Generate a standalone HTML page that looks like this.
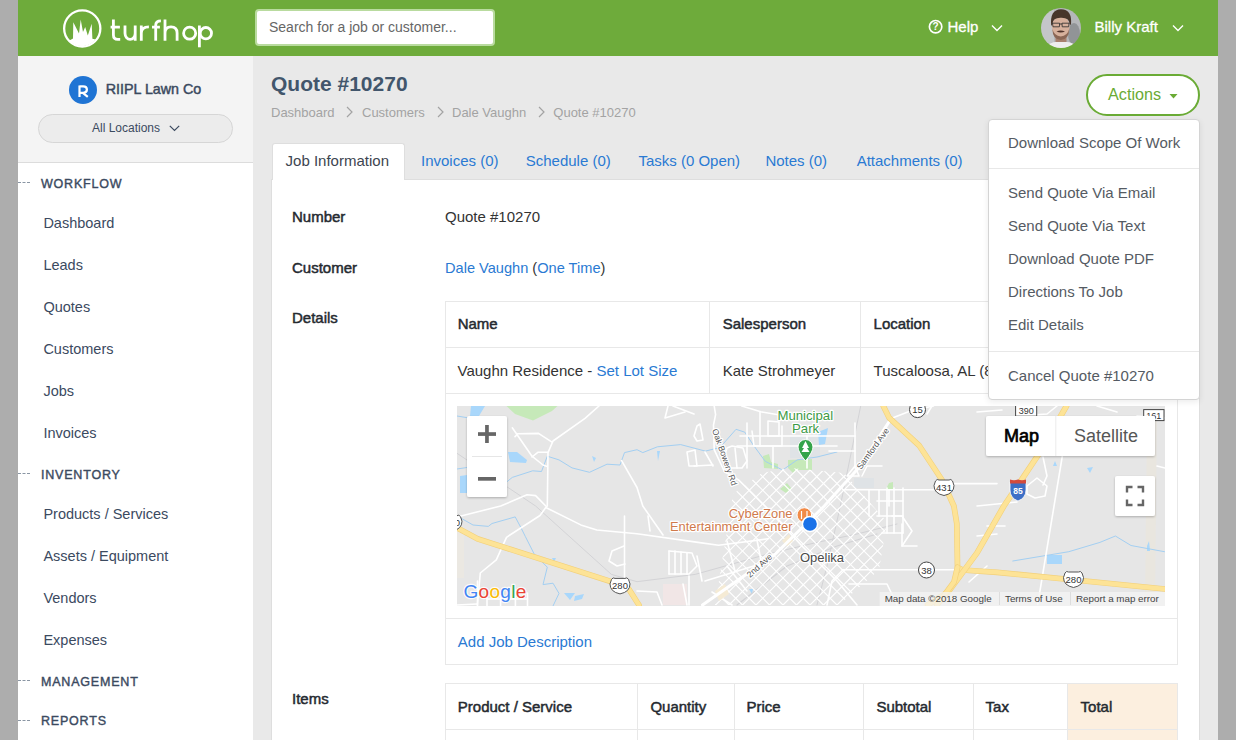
<!DOCTYPE html>
<html><head><meta charset="utf-8">
<style>
*{box-sizing:border-box;margin:0;padding:0}
html,body{width:1236px;height:740px;overflow:hidden;background:#adadad;font-family:"Liberation Sans",sans-serif;position:relative}
.t{position:absolute;white-space:nowrap;line-height:1}
.r{position:absolute}
svg{position:absolute;overflow:visible}
</style></head><body>
<div class="r" style="left:18px;top:0px;width:1200px;height:740px;background:#e9e9e9"></div>
<div class="r" style="left:18px;top:0px;width:1200px;height:56px;background:#6eab3b"></div>
<svg style="left:62px;top:8px" width="41" height="41" viewBox="0 0 41 41"><circle cx="20.25" cy="20.5" r="18.1" fill="none" stroke="#fff" stroke-width="2.3"/><path d="M7.4,32.6 L11,30.5 L11.3,14.2 L17,25.5 L18.7,11.6 L21,24 L23.2,19 L25.8,27.4 L29.7,15.8 L30.4,30.7 L33.6,31.6 A17.2,17.2 0 0 1 7.4,32.6 Z" fill="#fff"/></svg>
<svg style="left:0px;top:0px" width="240" height="56" viewBox="0 0 240 56"><path fill="none" stroke="#fff" stroke-width="2.8" d="M113.4,19.4 V35 Q113.4,39.4 117.8,39.4 H120.2 M110.6,27.1 H119.9"/><path fill="none" stroke="#fff" stroke-width="2.8" d="M125,25.5 V33.2 A5.1,6.2 0 0 0 135.2,33.2 M135.2,25.5 V40.8"/><path fill="none" stroke="#fff" stroke-width="2.8" d="M141.3,25.5 V40.8 M141.3,33 Q141.3,26.9 148.9,26.9"/><path fill="none" stroke="#fff" stroke-width="2.8" d="M155.7,40.8 V25.2 Q155.7,20.8 160.9,20.8 M152,27.1 H159.9"/><path fill="none" stroke="#fff" stroke-width="2.8" d="M165,19.4 V40.8 M165,33 Q165,26.9 171,26.9 Q177.1,26.9 177.1,33 V40.8"/><circle fill="none" stroke="#fff" stroke-width="2.8" cx="189.65" cy="33.15" r="6.05"/><path fill="none" stroke="#fff" stroke-width="2.8" d="M199.4,25.5 V47.3"/><circle fill="none" stroke="#fff" stroke-width="2.8" cx="205.85" cy="33.15" r="5.65"/></svg>
<div class="r" style="left:255px;top:9px;width:240px;height:37px;background:#fff;border:2px solid #b9db9f;border-radius:4px"></div>
<div class="t" style="left:269.0px;top:20.1px;font-size:14px;color:#666;">Search for a job or customer...</div>
<svg style="left:928px;top:19px" width="16" height="16" viewBox="0 0 16 16"><circle cx="7.6" cy="7.7" r="6.2" fill="none" stroke="#fff" stroke-width="1.7"/><text x="7.6" y="11.2" font-size="10" font-weight="bold" text-anchor="middle" fill="#fff" font-family="Liberation Sans">?</text></svg>
<div class="t" style="left:947.5px;top:18.8px;font-size:15px;color:#fff;-webkit-text-stroke:0.3px #fff;">Help</div>
<svg style="left:991px;top:24px" width="12" height="8" viewBox="0 0 12 8"><path d="M1 1.5 L6 6.5 L11 1.5" fill="none" stroke="#fff" stroke-width="1.4"/></svg>
<svg style="left:1041px;top:8px" width="40" height="40" viewBox="0 0 40 40"><defs><clipPath id="av"><circle cx="20" cy="20" r="20"/></clipPath><filter id="avb"><feGaussianBlur stdDeviation="0.7"/></filter></defs><g clip-path="url(#av)"><g filter="url(#avb)"><rect x="-2" y="-2" width="44" height="44" fill="#b5b7ba"/><rect x="-2" y="-2" width="15" height="44" fill="#c4c6c9"/><ellipse cx="33" cy="26" rx="6" ry="11" fill="#86888b" opacity="0.75"/><path d="M4,42 L8,36 Q14,33 20,34 Q27,33 33,36 L37,42Z" fill="#eeeeee"/><rect x="14.5" y="26" width="11" height="8" fill="#a8806e"/><ellipse cx="19.8" cy="19" rx="8.8" ry="11.4" fill="#d6b09c"/><path d="M11.4,21 Q11.6,31.5 19.8,32 Q28,31.5 28.2,21 Q26.5,28 19.8,28.5 Q13.1,28 11.4,21Z" fill="#8a6654"/><path d="M10.2,18 Q8.5,1.5 20,1.2 Q31.5,1.5 30,17 L28.6,16 Q28.3,9.5 20,9.8 Q11.8,9.5 11.5,16Z" fill="#46352b"/><path d="M11.5,15.2 L18.6,15.2 L18.4,18.8 L12,18.8Z M21,15.2 L28.1,15.2 L27.6,18.8 L21.2,18.8Z M18.6,16 L21,16" fill="none" stroke="#2a2a2a" stroke-width="0.8"/><path d="M15.5,23.5 Q19.8,21.5 24,23.5 Q19.8,25.5 15.5,23.5Z" fill="#4f3229"/></g></g></svg>
<div class="t" style="left:1094.5px;top:18.8px;font-size:15px;color:#fff;-webkit-text-stroke:0.3px #fff;">Billy Kraft</div>
<svg style="left:1172px;top:24px" width="12" height="8" viewBox="0 0 12 8"><path d="M1 1.5 L6 6.5 L11 1.5" fill="none" stroke="#fff" stroke-width="1.4"/></svg>
<div class="r" style="left:18px;top:56px;width:235px;height:684px;background:#fff"></div>
<div class="r" style="left:18px;top:56px;width:235px;height:107px;background:#f4f4f4;border-bottom:1px solid #dcdcdc"></div>
<div class="r" style="left:69px;top:76px;width:28px;height:28px;background:#1f74d4;border-radius:50%"></div>
<svg style="left:0;top:0" width="120" height="120"><path d="M79.5,85.5 V96.9 M79.5,86.4 H83.2 Q86.9,86.4 86.9,89.6 Q86.9,92.8 83.2,92.8 H79.5 M82.8,92.8 L87.8,96.9" fill="none" stroke="#fff" stroke-width="2.2" stroke-linejoin="round"/></svg>
<div class="t" style="left:105.7px;top:82.1px;font-size:14.3px;color:#3b4a5f;-webkit-text-stroke:0.46px #3b4a5f;">RIIPL Lawn Co</div>
<div class="r" style="left:38.2px;top:114.2px;width:194.5px;height:28.6px;background:#ececec;border:1px solid #d6d6d6;border-radius:14.3px"></div>
<div class="t" style="left:92.0px;top:121.8px;font-size:12px;color:#3b4a5f;">All Locations</div>
<svg style="left:169px;top:125px" width="11" height="7" viewBox="0 0 11 7"><path d="M0.8 0.8 L5.5 5.5 L10.2 0.8" fill="none" stroke="#3b4a5f" stroke-width="1.2"/></svg>
<div class="t" style="left:41.0px;top:177.6px;font-size:12.5px;color:#3b4a5f;-webkit-text-stroke:0.40px #3b4a5f;letter-spacing:0.8px;">WORKFLOW</div>
<div class="r" style="left:18px;top:182.0px;width:12px;height:1px;border-top:1px dashed #8a96a4"></div>
<div class="t" style="left:43.4px;top:215.5px;font-size:14.5px;color:#3b4a5f;">Dashboard</div>
<div class="t" style="left:43.4px;top:257.5px;font-size:14.5px;color:#3b4a5f;">Leads</div>
<div class="t" style="left:43.4px;top:299.5px;font-size:14.5px;color:#3b4a5f;">Quotes</div>
<div class="t" style="left:43.4px;top:341.5px;font-size:14.5px;color:#3b4a5f;">Customers</div>
<div class="t" style="left:43.4px;top:383.5px;font-size:14.5px;color:#3b4a5f;">Jobs</div>
<div class="t" style="left:43.4px;top:425.5px;font-size:14.5px;color:#3b4a5f;">Invoices</div>
<div class="t" style="left:41.0px;top:468.8px;font-size:12.5px;color:#3b4a5f;-webkit-text-stroke:0.40px #3b4a5f;letter-spacing:0.8px;">INVENTORY</div>
<div class="r" style="left:18px;top:473.2px;width:12px;height:1px;border-top:1px dashed #8a96a4"></div>
<div class="t" style="left:43.4px;top:507.1px;font-size:14.5px;color:#3b4a5f;">Products / Services</div>
<div class="t" style="left:43.4px;top:549.1px;font-size:14.5px;color:#3b4a5f;">Assets / Equipment</div>
<div class="t" style="left:43.4px;top:591.1px;font-size:14.5px;color:#3b4a5f;">Vendors</div>
<div class="t" style="left:43.4px;top:633.1px;font-size:14.5px;color:#3b4a5f;">Expenses</div>
<div class="t" style="left:41.0px;top:675.9px;font-size:12.5px;color:#3b4a5f;-webkit-text-stroke:0.40px #3b4a5f;letter-spacing:0.8px;">MANAGEMENT</div>
<div class="r" style="left:18px;top:680.3px;width:12px;height:1px;border-top:1px dashed #8a96a4"></div>
<div class="t" style="left:41.0px;top:715.1px;font-size:12.5px;color:#3b4a5f;-webkit-text-stroke:0.40px #3b4a5f;letter-spacing:0.8px;">REPORTS</div>
<div class="r" style="left:18px;top:719.5px;width:12px;height:1px;border-top:1px dashed #8a96a4"></div>
<div class="t" style="left:271.0px;top:72.7px;font-size:21px;color:#42566c;font-weight:bold;">Quote #10270</div>
<div class="t" style="left:271.0px;top:106.0px;font-size:13px;color:#a3a3a3;">Dashboard</div>
<div class="t" style="left:362.0px;top:106.0px;font-size:13px;color:#a3a3a3;">Customers</div>
<div class="t" style="left:452.0px;top:106.0px;font-size:13px;color:#a3a3a3;">Dale Vaughn</div>
<div class="t" style="left:553.3px;top:106.0px;font-size:13px;color:#a3a3a3;">Quote #10270</div>
<svg style="left:346px;top:106px" width="8" height="12" viewBox="0 0 8 12"><path d="M1 1 L6 6 L1 11" fill="none" stroke="#a3a3a3" stroke-width="1.2"/></svg>
<svg style="left:436.5px;top:106px" width="8" height="12" viewBox="0 0 8 12"><path d="M1 1 L6 6 L1 11" fill="none" stroke="#a3a3a3" stroke-width="1.2"/></svg>
<svg style="left:538px;top:106px" width="8" height="12" viewBox="0 0 8 12"><path d="M1 1 L6 6 L1 11" fill="none" stroke="#a3a3a3" stroke-width="1.2"/></svg>
<div class="r" style="left:271px;top:179px;width:928.5px;height:561px;background:#fff;border:1px solid #dedede;border-bottom:none"></div>
<div class="r" style="left:271.5px;top:143px;width:133px;height:37px;background:#fff;border:1px solid #dedede;border-bottom:none;border-radius:3px 3px 0 0"></div>
<div class="t" style="left:285.6px;top:152.8px;font-size:15px;color:#3d4550;">Job Information</div>
<div class="t" style="left:421.0px;top:152.8px;font-size:15px;color:#2a7ad3;">Invoices (0)</div>
<div class="t" style="left:525.7px;top:152.8px;font-size:15px;color:#2a7ad3;">Schedule (0)</div>
<div class="t" style="left:638.4px;top:152.8px;font-size:15px;color:#2a7ad3;">Tasks (0 Open)</div>
<div class="t" style="left:765.4px;top:152.8px;font-size:15px;color:#2a7ad3;">Notes (0)</div>
<div class="t" style="left:856.7px;top:152.8px;font-size:15px;color:#2a7ad3;">Attachments (0)</div>
<div class="r" style="left:1086.3px;top:74px;width:113.5px;height:42px;background:#fff;border:2px solid #6aab35;border-radius:21px"></div>
<div class="t" style="left:1108.0px;top:85.9px;font-size:16.2px;color:#6aab35;">Actions</div>
<svg style="left:1169px;top:94px" width="9" height="5" viewBox="0 0 9 5"><path d="M0.5 0 L8.5 0 L4.5 4.5Z" fill="#6aab35"/></svg>
<div class="t" style="left:292.0px;top:209.1px;font-size:15px;color:#252a30;-webkit-text-stroke:0.48px #252a30;">Number</div>
<div class="t" style="left:445.0px;top:209.3px;font-size:15px;color:#333;">Quote #10270</div>
<div class="t" style="left:292.0px;top:260.3px;font-size:15px;color:#252a30;-webkit-text-stroke:0.48px #252a30;">Customer</div>
<div class="t" style="left:445.0px;top:260.6px;font-size:14.6px;color:#333;"><span style="color:#2a7ad3">Dale Vaughn</span> (<span style="color:#2a7ad3">One Time</span>)</div>
<div class="t" style="left:292.0px;top:309.9px;font-size:15px;color:#252a30;-webkit-text-stroke:0.48px #252a30;">Details</div>
<div class="r" style="left:444.5px;top:301.3px;width:733.5px;height:363.5px;border:1px solid #e8e8e8"></div>
<div class="r" style="left:444.5px;top:347.3px;width:733.5px;height:1px;background:#e8e8e8"></div>
<div class="r" style="left:444.5px;top:393px;width:733.5px;height:1px;background:#e8e8e8"></div>
<div class="r" style="left:444.5px;top:617.5px;width:733.5px;height:1px;background:#e8e8e8"></div>
<div class="r" style="left:709.3px;top:301.3px;width:1px;height:92px;background:#e8e8e8"></div>
<div class="r" style="left:860.2px;top:301.3px;width:1px;height:92px;background:#e8e8e8"></div>
<div class="t" style="left:457.7px;top:316.3px;font-size:15px;color:#252a30;-webkit-text-stroke:0.48px #252a30;">Name</div>
<div class="t" style="left:722.7px;top:316.3px;font-size:15px;color:#252a30;-webkit-text-stroke:0.48px #252a30;">Salesperson</div>
<div class="t" style="left:873.6px;top:316.3px;font-size:15px;color:#252a30;-webkit-text-stroke:0.48px #252a30;">Location</div>
<div class="t" style="left:457.5px;top:362.9px;font-size:15px;color:#333;">Vaughn Residence - <span style="color:#2a7ad3">Set Lot Size</span></div>
<div class="t" style="left:722.7px;top:362.9px;font-size:15px;color:#333;">Kate Strohmeyer</div>
<div class="t" style="left:873.6px;top:362.9px;font-size:15px;color:#333;">Tuscaloosa, AL (80</div>
<svg style="left:457px;top:406px" width="708" height="200" viewBox="0 0 708 200" font-family="Liberation Sans"><defs><clipPath id="mc"><rect width="708" height="200"/></clipPath><clipPath id="town"><path d="M333,62 L387,67 L430,116 L422,164 L382,199 L258,199 L276,88 L305,67Z"/></clipPath><filter id="sh" x="-20%" y="-20%" width="140%" height="140%"><feDropShadow dx="0" dy="1" stdDeviation="1.2" flood-opacity="0.25"/></filter></defs><g clip-path="url(#mc)"><rect width="708" height="200" fill="#e6e6e6"/><path d="M49.5,0 L100.5,0 L95,5 L76,14.6 L58,8Z" fill="#c6e9b9"/><path d="M306,50 L312,48 L314,56 L321,58 L321,63 L307,62Z" fill="#c6e9b9"/><path d="M331,54 L355,53 L355,64 L340,64 L336,67 L331,62Z" fill="#c6e9b9"/><path d="M323,83 L330,77 L335,83 L329,87Z" fill="#c6e9b9"/><path d="M429,83 L432,77 L436,76 L436,83Z" fill="#c6e9b9"/><rect x="333" y="30" width="30" height="22" fill="#dfe3e6"/><rect x="397" y="72" width="20" height="10" fill="#dfe3e6"/><rect x="206" y="178" width="24" height="21" fill="#f1e6e6"/><rect x="0" y="122" width="7" height="50" fill="#ebe8e2"/><rect x="625" y="0" width="83" height="199" fill="#e6e6e6"/><path d="M690,10 L700,10 L698,199 L688,199Z" fill="#e9e6df"/><path d="M14,0 L28,0 L22,10 L13,10Z" fill="#a9d7fb"/><path d="M51,46 L60,46 L70,54 L69,57 L53,56Z" fill="#a9d7fb"/><path d="M3,70 L10,69 L10,87 L3,87Z" fill="#a9d7fb"/><path d="M361,26 L371,22 L368,38 L362,39Z" fill="#a9d7fb"/><path d="M365,6 L371,4 L372,10 L366,12Z" fill="#a9d7fb"/><path d="M590,149 L605,149 L605,158 L590,158Z" fill="#a9d7fb"/><path d="M107,187 L118,187 L113,194Z" fill="#a9d7fb"/><path d="M118,190 L127,188 L125,193 L117,195Z" fill="#a9d7fb"/><path d="M292,183 L296,183 L295,188Z" fill="#a9d7fb"/><path d="M630,62 L636,61 L633,67Z" fill="#a9d7fb"/><path d="M681,22 L684,18 L686,28 L682,28Z" fill="#a9d7fb"/><path d="M570,10 L573,8 L573,14Z" fill="#a9d7fb"/><path d="M598,55 L600,60 L596,60Z" fill="#a9d7fb"/><path d="M690,140 L692,135 L693,145 L690,145Z" fill="#a9d7fb"/><path d="M200,45 L203,45 L201,55Z" fill="#a9d7fb"/><path d="M135,50 L139,52 L137,56Z" fill="#a9d7fb"/><path d="M95,152 L99,152 L97,156Z" fill="#a9d7fb"/><path d="M50,75.7 L55.3,71.4 L75.7,64.8 L84.5,65.5 L90.3,50.2 L102,53.9 L115,61.9 L132.5,66.3 L150,58.2 L163,59 L167.5,46.6 L180,43.7 L185.8,46.6 L200.4,40.8 L223.7,38.6 L248.4,45.1 L263,41.5 L279,23.3 L287.8,26.2 L296.5,39.3 L308.2,55.3 L325.6,64 L340.2,53.9 L360,51 L380,46" fill="none" stroke="#a3cff2" stroke-width="1" stroke-linejoin="round" stroke-linecap="round" /><path d="M4.4,112.4 L16,119 L31.3,120.4 L35,117.5 L58.2,110.9 L64,121.8 L68.4,130.6 L77.2,148 L90.3,161.2 L86,178.6 L96,177.2 L102,187.4 L96,200" fill="none" stroke="#a3cff2" stroke-width="1" stroke-linejoin="round" stroke-linecap="round" /><path d="M555.8,155 L611.8,145.7 L642.9,136.4 L658.4,130 L674,139.5 L707.5,145.7" fill="none" stroke="#a3cff2" stroke-width="1" stroke-linejoin="round" stroke-linecap="round" /><path d="M0,10 L12,12" fill="none" stroke="#a3cff2" stroke-width="1" stroke-linejoin="round" stroke-linecap="round" /><path d="M0,63 L20,60 L45,58" fill="none" stroke="#a3cff2" stroke-width="1" stroke-linejoin="round" stroke-linecap="round" /><path d="M0,47.3 L78.6,100 L154.4,168.4 L180,175.7 L238.2,168.4 L311,148 L360,136.4 L400,128 L440,118" fill="none" stroke="#d3d3d6" stroke-width="1" stroke-linejoin="round" stroke-linecap="round" /><path d="M403.7,0 L383.3,100 L370,160 L360,199" fill="none" stroke="#d3d3d6" stroke-width="1" stroke-linejoin="round" stroke-linecap="round" /><path d="M280,199 L330,160 L380,140 L420,128" fill="none" stroke="#d3d3d6" stroke-width="1.2" stroke-linejoin="round" stroke-linecap="round" /><path d="M142,0 L128,12.4 L96,35 L91,46.6 L90.3,100 L88.8,101.5 L83,109.5 L49.5,131.3 L39.3,153.9 L23.3,167 L20.4,199" fill="none" stroke="#fff" stroke-width="1.6" stroke-linejoin="round" stroke-linecap="round" /><path d="M55.3,21.8 L75,50.2 L86,59 L90.3,60.4" fill="none" stroke="#fff" stroke-width="1.6" stroke-linejoin="round" stroke-linecap="round" /><path d="M58,30.6 L61,27.7 L81.5,27.4 L95.4,36.4" fill="none" stroke="#fff" stroke-width="1.6" stroke-linejoin="round" stroke-linecap="round" /><path d="M75,51 L80.8,46.3 L91,46.3" fill="none" stroke="#fff" stroke-width="1.6" stroke-linejoin="round" stroke-linecap="round" /><path d="M0,111 L43.7,100 L70,88.8 L78.6,89.6 L88.8,100" fill="none" stroke="#fff" stroke-width="1.6" stroke-linejoin="round" stroke-linecap="round" /><path d="M88.8,101.5 L123.8,118.9 L139.8,124 L180,127.7 L241,136.4 L261.5,139.3 L311,132.8" fill="none" stroke="#fff" stroke-width="1.6" stroke-linejoin="round" stroke-linecap="round" /><path d="M164.6,54.6 L180,81.5 L185.8,100 L206,129" fill="none" stroke="#fff" stroke-width="1.6" stroke-linejoin="round" stroke-linecap="round" /><path d="M167.5,110 L167.5,178.6" fill="none" stroke="#fff" stroke-width="1.6" stroke-linejoin="round" stroke-linecap="round" /><path d="M167,140 L155,145 L152,155 L160,160 L168,158" fill="none" stroke="#fff" stroke-width="1.6" stroke-linejoin="round" stroke-linecap="round" /><path d="M257.2,0 L258.6,8.7 L256.5,19 L257.2,43.7 L267.4,65.5 L282,74.3 L308,100 L345,140 L380,175 L400,199" fill="none" stroke="#fff" stroke-width="1.6" stroke-linejoin="round" stroke-linecap="round" /><path d="M216,0 L237,8" fill="none" stroke="#fff" stroke-width="1.6" stroke-linejoin="round" stroke-linecap="round" /><path d="M211,0 L208,12 L228,6" fill="none" stroke="#fff" stroke-width="1.6" stroke-linejoin="round" stroke-linecap="round" /><path d="M240,20 L243,18 L246,34 L240,35 L237,30Z" fill="none" stroke="#fff" stroke-width="1.6" stroke-linejoin="round" stroke-linecap="round" /><path d="M230,46 L238,44 L240,60 L232,60Z" fill="none" stroke="#fff" stroke-width="1.6" stroke-linejoin="round" stroke-linecap="round" /><path d="M248,46 L256,60" fill="none" stroke="#fff" stroke-width="1.6" stroke-linejoin="round" stroke-linecap="round" /><path d="M237,60 L256,59" fill="none" stroke="#fff" stroke-width="1.6" stroke-linejoin="round" stroke-linecap="round" /><path d="M270,42 L275,40 L286,42 L290,55 L285,62 L270,62 L266,55Z" fill="none" stroke="#fff" stroke-width="1.6" stroke-linejoin="round" stroke-linecap="round" /><path d="M278,42 L280,62" fill="none" stroke="#fff" stroke-width="1.6" stroke-linejoin="round" stroke-linecap="round" /><path d="M284.8,0 L303.8,5.8 L325.6,9.5 L360,8.7" fill="none" stroke="#fff" stroke-width="1.6" stroke-linejoin="round" stroke-linecap="round" /><path d="M303,6 L303,40" fill="none" stroke="#fff" stroke-width="1.6" stroke-linejoin="round" stroke-linecap="round" /><path d="M295,25 L297,40 L325,40 L325,20" fill="none" stroke="#fff" stroke-width="1.6" stroke-linejoin="round" stroke-linecap="round" /><path d="M311,15 L322,16 L322,30 L311,30Z" fill="none" stroke="#fff" stroke-width="1.6" stroke-linejoin="round" stroke-linecap="round" /><path d="M280,40 L380,40" fill="none" stroke="#fff" stroke-width="1.6" stroke-linejoin="round" stroke-linecap="round" /><path d="M191,110 L193,125" fill="none" stroke="#fff" stroke-width="1.6" stroke-linejoin="round" stroke-linecap="round" /><path d="M212,145 L212,168" fill="none" stroke="#fff" stroke-width="1.6" stroke-linejoin="round" stroke-linecap="round" /><path d="M212,145 L235,147 L240,160 L232,168 L212,168" fill="none" stroke="#fff" stroke-width="1.6" stroke-linejoin="round" stroke-linecap="round" /><path d="M218,145 L218,168" fill="none" stroke="#fff" stroke-width="1.6" stroke-linejoin="round" stroke-linecap="round" /><path d="M224,146 L224,168" fill="none" stroke="#fff" stroke-width="1.6" stroke-linejoin="round" stroke-linecap="round" /><path d="M230,147 L230,168" fill="none" stroke="#fff" stroke-width="1.6" stroke-linejoin="round" stroke-linecap="round" /><path d="M232,170 L232,199" fill="none" stroke="#fff" stroke-width="1.6" stroke-linejoin="round" stroke-linecap="round" /><path d="M240,150 L245,175" fill="none" stroke="#fff" stroke-width="1.6" stroke-linejoin="round" stroke-linecap="round" /><path d="M270,135 L278,165" fill="none" stroke="#fff" stroke-width="1.6" stroke-linejoin="round" stroke-linecap="round" /><path d="M300,134 L305,160" fill="none" stroke="#fff" stroke-width="1.6" stroke-linejoin="round" stroke-linecap="round" /><path d="M248,175 L310,156" fill="none" stroke="#fff" stroke-width="1.6" stroke-linejoin="round" stroke-linecap="round" /><path d="M226,178 L230,199" fill="none" stroke="#fff" stroke-width="1.6" stroke-linejoin="round" stroke-linecap="round" /><path d="M180,185 L200,186 L205,199" fill="none" stroke="#fff" stroke-width="1.6" stroke-linejoin="round" stroke-linecap="round" /><path d="M432.8,13 L454.7,4.4 L476.5,0" fill="none" stroke="#fff" stroke-width="1.6" stroke-linejoin="round" stroke-linecap="round" /><path d="M432.8,14.6 L402.2,61.2 L367.3,100 L318.3,148 L245.5,199" fill="none" stroke="#fff" stroke-width="1.6" stroke-linejoin="round" stroke-linecap="round" /><path d="M386,83.7 L476.5,83.7" fill="none" stroke="#fff" stroke-width="1.6" stroke-linejoin="round" stroke-linecap="round" /><path d="M497,77.6 L540,77.6" fill="none" stroke="#fff" stroke-width="1.6" stroke-linejoin="round" stroke-linecap="round" /><path d="M386,163.8 L500,163.8" fill="none" stroke="#fff" stroke-width="1.6" stroke-linejoin="round" stroke-linecap="round" /><path d="M386,163.8 L375,175 L370,199" fill="none" stroke="#fff" stroke-width="1.6" stroke-linejoin="round" stroke-linecap="round" /><path d="M412,83.7 L412,110" fill="none" stroke="#fff" stroke-width="1.6" stroke-linejoin="round" stroke-linecap="round" /><path d="M422,83.7 L422,110" fill="none" stroke="#fff" stroke-width="1.6" stroke-linejoin="round" stroke-linecap="round" /><path d="M432,83.7 L432,100" fill="none" stroke="#fff" stroke-width="1.6" stroke-linejoin="round" stroke-linecap="round" /><path d="M405,70 L410,60 L425,60" fill="none" stroke="#fff" stroke-width="1.6" stroke-linejoin="round" stroke-linecap="round" /><path d="M390,70 L398,60 L402,70 L390,70" fill="none" stroke="#fff" stroke-width="1.6" stroke-linejoin="round" stroke-linecap="round" /><path d="M475,0 L470,8" fill="none" stroke="#fff" stroke-width="1.6" stroke-linejoin="round" stroke-linecap="round" /><path d="M605.5,49 L580.7,198.5" fill="none" stroke="#fff" stroke-width="1.6" stroke-linejoin="round" stroke-linecap="round" /><path d="M586,51 L590,70 L586,79" fill="none" stroke="#fff" stroke-width="1.6" stroke-linejoin="round" stroke-linecap="round" /><path d="M570,80 L580,72 L590,80 L588,90 L578,92 L570,88Z" fill="none" stroke="#fff" stroke-width="1.6" stroke-linejoin="round" stroke-linecap="round" /><path d="M512,176 L530,160" fill="none" stroke="#fff" stroke-width="1.6" stroke-linejoin="round" stroke-linecap="round" /><path d="M520,100 L560,96" fill="none" stroke="#fff" stroke-width="1.6" stroke-linejoin="round" stroke-linecap="round" /><path d="M530,120 L548,120" fill="none" stroke="#fff" stroke-width="1.6" stroke-linejoin="round" stroke-linecap="round" /><path d="M520,130 L540,128" fill="none" stroke="#fff" stroke-width="1.6" stroke-linejoin="round" stroke-linecap="round" /><path d="M640,0 L660,6" fill="none" stroke="#fff" stroke-width="1.6" stroke-linejoin="round" stroke-linecap="round" /><path d="M680,10 L708,12" fill="none" stroke="#fff" stroke-width="1.6" stroke-linejoin="round" stroke-linecap="round" /><path d="M700,60 L708,62" fill="none" stroke="#fff" stroke-width="1.6" stroke-linejoin="round" stroke-linecap="round" /><path d="M445,118 L445,140 L460,140" fill="none" stroke="#fff" stroke-width="1.6" stroke-linejoin="round" stroke-linecap="round" /><path d="M600,0 L590,8 L560,10" fill="none" stroke="#fff" stroke-width="1.6" stroke-linejoin="round" stroke-linecap="round" /><path d="M520,6 L545,4" fill="none" stroke="#fff" stroke-width="1.6" stroke-linejoin="round" stroke-linecap="round" /><path d="M435,110 L445,110 L455,125 L445,140" fill="none" stroke="#fff" stroke-width="1.6" stroke-linejoin="round" stroke-linecap="round" /><path d="M392,178 L430,178 L440,199" fill="none" stroke="#fff" stroke-width="1.6" stroke-linejoin="round" stroke-linecap="round" /><path d="M270,160 L290,185" fill="none" stroke="#fff" stroke-width="1.6" stroke-linejoin="round" stroke-linecap="round" /><path d="M255,186 L275,199" fill="none" stroke="#fff" stroke-width="1.6" stroke-linejoin="round" stroke-linecap="round" /><path d="M20.5,175 L20.5,200" fill="none" stroke="#fff" stroke-width="1.6" stroke-linejoin="round" stroke-linecap="round" /><path d="M30,188 L30,200" fill="none" stroke="#fff" stroke-width="1.6" stroke-linejoin="round" stroke-linecap="round" /><path d="M43.6,186 L43.6,200" fill="none" stroke="#fff" stroke-width="1.6" stroke-linejoin="round" stroke-linecap="round" /><path d="M58.4,184 L58.4,200" fill="none" stroke="#fff" stroke-width="1.6" stroke-linejoin="round" stroke-linecap="round" /><path d="M70.5,187 L70.5,200" fill="none" stroke="#fff" stroke-width="1.6" stroke-linejoin="round" stroke-linecap="round" /><path d="M0,199 L20,198" fill="none" stroke="#fff" stroke-width="1.6" stroke-linejoin="round" stroke-linecap="round" /><path d="M30,193 L70.5,193" fill="none" stroke="#fff" stroke-width="1.6" stroke-linejoin="round" stroke-linecap="round" /><path d="M430,82 L430,127" fill="none" stroke="#fff" stroke-width="1.6" stroke-linejoin="round" stroke-linecap="round" /><path d="M437,82 L437,127" fill="none" stroke="#fff" stroke-width="1.6" stroke-linejoin="round" stroke-linecap="round" /><path d="M446,82 L446,127" fill="none" stroke="#fff" stroke-width="1.6" stroke-linejoin="round" stroke-linecap="round" /><path d="M420,95 L446,95" fill="none" stroke="#fff" stroke-width="1.6" stroke-linejoin="round" stroke-linecap="round" /><path d="M420,110 L446,110" fill="none" stroke="#fff" stroke-width="1.6" stroke-linejoin="round" stroke-linecap="round" /><path d="M425,127 L446,127" fill="none" stroke="#fff" stroke-width="1.6" stroke-linejoin="round" stroke-linecap="round" /><path d="M283,30 L398,30" fill="none" stroke="#fff" stroke-width="1.6" stroke-linejoin="round" stroke-linecap="round" /><path d="M290,17 L290,62" fill="none" stroke="#fff" stroke-width="1.6" stroke-linejoin="round" stroke-linecap="round" /><path d="M316,40 L316,62" fill="none" stroke="#fff" stroke-width="1.6" stroke-linejoin="round" stroke-linecap="round" /><path d="M398,17 L398,62" fill="none" stroke="#fff" stroke-width="1.6" stroke-linejoin="round" stroke-linecap="round" /><path d="M372,45 L398,45" fill="none" stroke="#fff" stroke-width="1.6" stroke-linejoin="round" stroke-linecap="round" /><path d="M350,30 L350,62" fill="none" stroke="#fff" stroke-width="1.6" stroke-linejoin="round" stroke-linecap="round" /><g clip-path="url(#town)"><path d="M203,-137.0 L503,-437.0" fill="none" stroke="#fff" stroke-width="1.2" stroke-linejoin="round" stroke-linecap="round" /><path d="M203,-437.0 L503,-137.0" fill="none" stroke="#fff" stroke-width="1.2" stroke-linejoin="round" stroke-linecap="round" /><path d="M203,-123.5 L503,-423.5" fill="none" stroke="#fff" stroke-width="1.2" stroke-linejoin="round" stroke-linecap="round" /><path d="M203,-423.5 L503,-123.5" fill="none" stroke="#fff" stroke-width="1.2" stroke-linejoin="round" stroke-linecap="round" /><path d="M203,-110.0 L503,-410.0" fill="none" stroke="#fff" stroke-width="1.2" stroke-linejoin="round" stroke-linecap="round" /><path d="M203,-410.0 L503,-110.0" fill="none" stroke="#fff" stroke-width="1.2" stroke-linejoin="round" stroke-linecap="round" /><path d="M203,-96.5 L503,-396.5" fill="none" stroke="#fff" stroke-width="1.2" stroke-linejoin="round" stroke-linecap="round" /><path d="M203,-396.5 L503,-96.5" fill="none" stroke="#fff" stroke-width="1.2" stroke-linejoin="round" stroke-linecap="round" /><path d="M203,-83.0 L503,-383.0" fill="none" stroke="#fff" stroke-width="1.2" stroke-linejoin="round" stroke-linecap="round" /><path d="M203,-383.0 L503,-83.0" fill="none" stroke="#fff" stroke-width="1.2" stroke-linejoin="round" stroke-linecap="round" /><path d="M203,-69.5 L503,-369.5" fill="none" stroke="#fff" stroke-width="1.2" stroke-linejoin="round" stroke-linecap="round" /><path d="M203,-369.5 L503,-69.5" fill="none" stroke="#fff" stroke-width="1.2" stroke-linejoin="round" stroke-linecap="round" /><path d="M203,-56.0 L503,-356.0" fill="none" stroke="#fff" stroke-width="1.2" stroke-linejoin="round" stroke-linecap="round" /><path d="M203,-356.0 L503,-56.0" fill="none" stroke="#fff" stroke-width="1.2" stroke-linejoin="round" stroke-linecap="round" /><path d="M203,-42.5 L503,-342.5" fill="none" stroke="#fff" stroke-width="1.2" stroke-linejoin="round" stroke-linecap="round" /><path d="M203,-342.5 L503,-42.5" fill="none" stroke="#fff" stroke-width="1.2" stroke-linejoin="round" stroke-linecap="round" /><path d="M203,-29.0 L503,-329.0" fill="none" stroke="#fff" stroke-width="1.2" stroke-linejoin="round" stroke-linecap="round" /><path d="M203,-329.0 L503,-29.0" fill="none" stroke="#fff" stroke-width="1.2" stroke-linejoin="round" stroke-linecap="round" /><path d="M203,-15.5 L503,-315.5" fill="none" stroke="#fff" stroke-width="1.2" stroke-linejoin="round" stroke-linecap="round" /><path d="M203,-315.5 L503,-15.5" fill="none" stroke="#fff" stroke-width="1.2" stroke-linejoin="round" stroke-linecap="round" /><path d="M203,-2.0 L503,-302.0" fill="none" stroke="#fff" stroke-width="1.2" stroke-linejoin="round" stroke-linecap="round" /><path d="M203,-302.0 L503,-2.0" fill="none" stroke="#fff" stroke-width="1.2" stroke-linejoin="round" stroke-linecap="round" /><path d="M203,11.5 L503,-288.5" fill="none" stroke="#fff" stroke-width="1.2" stroke-linejoin="round" stroke-linecap="round" /><path d="M203,-288.5 L503,11.5" fill="none" stroke="#fff" stroke-width="1.2" stroke-linejoin="round" stroke-linecap="round" /><path d="M203,25.0 L503,-275.0" fill="none" stroke="#fff" stroke-width="1.2" stroke-linejoin="round" stroke-linecap="round" /><path d="M203,-275.0 L503,25.0" fill="none" stroke="#fff" stroke-width="1.2" stroke-linejoin="round" stroke-linecap="round" /><path d="M203,38.5 L503,-261.5" fill="none" stroke="#fff" stroke-width="1.2" stroke-linejoin="round" stroke-linecap="round" /><path d="M203,-261.5 L503,38.5" fill="none" stroke="#fff" stroke-width="1.2" stroke-linejoin="round" stroke-linecap="round" /><path d="M203,52.0 L503,-248.0" fill="none" stroke="#fff" stroke-width="1.2" stroke-linejoin="round" stroke-linecap="round" /><path d="M203,-248.0 L503,52.0" fill="none" stroke="#fff" stroke-width="1.2" stroke-linejoin="round" stroke-linecap="round" /><path d="M203,65.5 L503,-234.5" fill="none" stroke="#fff" stroke-width="1.2" stroke-linejoin="round" stroke-linecap="round" /><path d="M203,-234.5 L503,65.5" fill="none" stroke="#fff" stroke-width="1.2" stroke-linejoin="round" stroke-linecap="round" /><path d="M203,79.0 L503,-221.0" fill="none" stroke="#fff" stroke-width="1.2" stroke-linejoin="round" stroke-linecap="round" /><path d="M203,-221.0 L503,79.0" fill="none" stroke="#fff" stroke-width="1.2" stroke-linejoin="round" stroke-linecap="round" /><path d="M203,92.5 L503,-207.5" fill="none" stroke="#fff" stroke-width="1.2" stroke-linejoin="round" stroke-linecap="round" /><path d="M203,-207.5 L503,92.5" fill="none" stroke="#fff" stroke-width="1.2" stroke-linejoin="round" stroke-linecap="round" /><path d="M203,106.0 L503,-194.0" fill="none" stroke="#fff" stroke-width="1.2" stroke-linejoin="round" stroke-linecap="round" /><path d="M203,-194.0 L503,106.0" fill="none" stroke="#fff" stroke-width="1.2" stroke-linejoin="round" stroke-linecap="round" /><path d="M203,119.5 L503,-180.5" fill="none" stroke="#fff" stroke-width="1.2" stroke-linejoin="round" stroke-linecap="round" /><path d="M203,-180.5 L503,119.5" fill="none" stroke="#fff" stroke-width="1.2" stroke-linejoin="round" stroke-linecap="round" /><path d="M203,133.0 L503,-167.0" fill="none" stroke="#fff" stroke-width="1.2" stroke-linejoin="round" stroke-linecap="round" /><path d="M203,-167.0 L503,133.0" fill="none" stroke="#fff" stroke-width="1.2" stroke-linejoin="round" stroke-linecap="round" /><path d="M203,146.5 L503,-153.5" fill="none" stroke="#fff" stroke-width="1.2" stroke-linejoin="round" stroke-linecap="round" /><path d="M203,-153.5 L503,146.5" fill="none" stroke="#fff" stroke-width="1.2" stroke-linejoin="round" stroke-linecap="round" /><path d="M203,160.0 L503,-140.0" fill="none" stroke="#fff" stroke-width="1.2" stroke-linejoin="round" stroke-linecap="round" /><path d="M203,-140.0 L503,160.0" fill="none" stroke="#fff" stroke-width="1.2" stroke-linejoin="round" stroke-linecap="round" /><path d="M203,173.5 L503,-126.5" fill="none" stroke="#fff" stroke-width="1.2" stroke-linejoin="round" stroke-linecap="round" /><path d="M203,-126.5 L503,173.5" fill="none" stroke="#fff" stroke-width="1.2" stroke-linejoin="round" stroke-linecap="round" /><path d="M203,187.0 L503,-113.0" fill="none" stroke="#fff" stroke-width="1.2" stroke-linejoin="round" stroke-linecap="round" /><path d="M203,-113.0 L503,187.0" fill="none" stroke="#fff" stroke-width="1.2" stroke-linejoin="round" stroke-linecap="round" /><path d="M203,200.5 L503,-99.5" fill="none" stroke="#fff" stroke-width="1.2" stroke-linejoin="round" stroke-linecap="round" /><path d="M203,-99.5 L503,200.5" fill="none" stroke="#fff" stroke-width="1.2" stroke-linejoin="round" stroke-linecap="round" /><path d="M203,214.0 L503,-86.0" fill="none" stroke="#fff" stroke-width="1.2" stroke-linejoin="round" stroke-linecap="round" /><path d="M203,-86.0 L503,214.0" fill="none" stroke="#fff" stroke-width="1.2" stroke-linejoin="round" stroke-linecap="round" /><path d="M203,227.5 L503,-72.5" fill="none" stroke="#fff" stroke-width="1.2" stroke-linejoin="round" stroke-linecap="round" /><path d="M203,-72.5 L503,227.5" fill="none" stroke="#fff" stroke-width="1.2" stroke-linejoin="round" stroke-linecap="round" /><path d="M203,241.0 L503,-59.0" fill="none" stroke="#fff" stroke-width="1.2" stroke-linejoin="round" stroke-linecap="round" /><path d="M203,-59.0 L503,241.0" fill="none" stroke="#fff" stroke-width="1.2" stroke-linejoin="round" stroke-linecap="round" /><path d="M203,254.5 L503,-45.5" fill="none" stroke="#fff" stroke-width="1.2" stroke-linejoin="round" stroke-linecap="round" /><path d="M203,-45.5 L503,254.5" fill="none" stroke="#fff" stroke-width="1.2" stroke-linejoin="round" stroke-linecap="round" /><path d="M203,268.0 L503,-32.0" fill="none" stroke="#fff" stroke-width="1.2" stroke-linejoin="round" stroke-linecap="round" /><path d="M203,-32.0 L503,268.0" fill="none" stroke="#fff" stroke-width="1.2" stroke-linejoin="round" stroke-linecap="round" /><path d="M203,281.5 L503,-18.5" fill="none" stroke="#fff" stroke-width="1.2" stroke-linejoin="round" stroke-linecap="round" /><path d="M203,-18.5 L503,281.5" fill="none" stroke="#fff" stroke-width="1.2" stroke-linejoin="round" stroke-linecap="round" /><path d="M203,295.0 L503,-5.0" fill="none" stroke="#fff" stroke-width="1.2" stroke-linejoin="round" stroke-linecap="round" /><path d="M203,-5.0 L503,295.0" fill="none" stroke="#fff" stroke-width="1.2" stroke-linejoin="round" stroke-linecap="round" /><path d="M203,308.5 L503,8.5" fill="none" stroke="#fff" stroke-width="1.2" stroke-linejoin="round" stroke-linecap="round" /><path d="M203,8.5 L503,308.5" fill="none" stroke="#fff" stroke-width="1.2" stroke-linejoin="round" stroke-linecap="round" /><path d="M203,322.0 L503,22.0" fill="none" stroke="#fff" stroke-width="1.2" stroke-linejoin="round" stroke-linecap="round" /><path d="M203,22.0 L503,322.0" fill="none" stroke="#fff" stroke-width="1.2" stroke-linejoin="round" stroke-linecap="round" /><path d="M203,335.5 L503,35.5" fill="none" stroke="#fff" stroke-width="1.2" stroke-linejoin="round" stroke-linecap="round" /><path d="M203,35.5 L503,335.5" fill="none" stroke="#fff" stroke-width="1.2" stroke-linejoin="round" stroke-linecap="round" /><path d="M203,349.0 L503,49.0" fill="none" stroke="#fff" stroke-width="1.2" stroke-linejoin="round" stroke-linecap="round" /><path d="M203,49.0 L503,349.0" fill="none" stroke="#fff" stroke-width="1.2" stroke-linejoin="round" stroke-linecap="round" /><path d="M203,362.5 L503,62.5" fill="none" stroke="#fff" stroke-width="1.2" stroke-linejoin="round" stroke-linecap="round" /><path d="M203,62.5 L503,362.5" fill="none" stroke="#fff" stroke-width="1.2" stroke-linejoin="round" stroke-linecap="round" /><path d="M203,376.0 L503,76.0" fill="none" stroke="#fff" stroke-width="1.2" stroke-linejoin="round" stroke-linecap="round" /><path d="M203,76.0 L503,376.0" fill="none" stroke="#fff" stroke-width="1.2" stroke-linejoin="round" stroke-linecap="round" /><path d="M203,389.5 L503,89.5" fill="none" stroke="#fff" stroke-width="1.2" stroke-linejoin="round" stroke-linecap="round" /><path d="M203,89.5 L503,389.5" fill="none" stroke="#fff" stroke-width="1.2" stroke-linejoin="round" stroke-linecap="round" /><path d="M203,403.0 L503,103.0" fill="none" stroke="#fff" stroke-width="1.2" stroke-linejoin="round" stroke-linecap="round" /><path d="M203,103.0 L503,403.0" fill="none" stroke="#fff" stroke-width="1.2" stroke-linejoin="round" stroke-linecap="round" /><path d="M203,416.5 L503,116.5" fill="none" stroke="#fff" stroke-width="1.2" stroke-linejoin="round" stroke-linecap="round" /><path d="M203,116.5 L503,416.5" fill="none" stroke="#fff" stroke-width="1.2" stroke-linejoin="round" stroke-linecap="round" /><path d="M203,430.0 L503,130.0" fill="none" stroke="#fff" stroke-width="1.2" stroke-linejoin="round" stroke-linecap="round" /><path d="M203,130.0 L503,430.0" fill="none" stroke="#fff" stroke-width="1.2" stroke-linejoin="round" stroke-linecap="round" /><path d="M203,443.5 L503,143.5" fill="none" stroke="#fff" stroke-width="1.2" stroke-linejoin="round" stroke-linecap="round" /><path d="M203,143.5 L503,443.5" fill="none" stroke="#fff" stroke-width="1.2" stroke-linejoin="round" stroke-linecap="round" /><path d="M203,457.0 L503,157.0" fill="none" stroke="#fff" stroke-width="1.2" stroke-linejoin="round" stroke-linecap="round" /><path d="M203,157.0 L503,457.0" fill="none" stroke="#fff" stroke-width="1.2" stroke-linejoin="round" stroke-linecap="round" /><path d="M203,470.5 L503,170.5" fill="none" stroke="#fff" stroke-width="1.2" stroke-linejoin="round" stroke-linecap="round" /><path d="M203,170.5 L503,470.5" fill="none" stroke="#fff" stroke-width="1.2" stroke-linejoin="round" stroke-linecap="round" /><path d="M203,484.0 L503,184.0" fill="none" stroke="#fff" stroke-width="1.2" stroke-linejoin="round" stroke-linecap="round" /><path d="M203,184.0 L503,484.0" fill="none" stroke="#fff" stroke-width="1.2" stroke-linejoin="round" stroke-linecap="round" /><path d="M203,497.5 L503,197.5" fill="none" stroke="#fff" stroke-width="1.2" stroke-linejoin="round" stroke-linecap="round" /><path d="M203,197.5 L503,497.5" fill="none" stroke="#fff" stroke-width="1.2" stroke-linejoin="round" stroke-linecap="round" /><path d="M203,511.0 L503,211.0" fill="none" stroke="#fff" stroke-width="1.2" stroke-linejoin="round" stroke-linecap="round" /><path d="M203,211.0 L503,511.0" fill="none" stroke="#fff" stroke-width="1.2" stroke-linejoin="round" stroke-linecap="round" /><path d="M203,524.5 L503,224.5" fill="none" stroke="#fff" stroke-width="1.2" stroke-linejoin="round" stroke-linecap="round" /><path d="M203,224.5 L503,524.5" fill="none" stroke="#fff" stroke-width="1.2" stroke-linejoin="round" stroke-linecap="round" /><path d="M203,538.0 L503,238.0" fill="none" stroke="#fff" stroke-width="1.2" stroke-linejoin="round" stroke-linecap="round" /><path d="M203,238.0 L503,538.0" fill="none" stroke="#fff" stroke-width="1.2" stroke-linejoin="round" stroke-linecap="round" /><path d="M203,551.5 L503,251.5" fill="none" stroke="#fff" stroke-width="1.2" stroke-linejoin="round" stroke-linecap="round" /><path d="M203,251.5 L503,551.5" fill="none" stroke="#fff" stroke-width="1.2" stroke-linejoin="round" stroke-linecap="round" /><path d="M203,565.0 L503,265.0" fill="none" stroke="#fff" stroke-width="1.2" stroke-linejoin="round" stroke-linecap="round" /><path d="M203,265.0 L503,565.0" fill="none" stroke="#fff" stroke-width="1.2" stroke-linejoin="round" stroke-linecap="round" /><path d="M203,578.5 L503,278.5" fill="none" stroke="#fff" stroke-width="1.2" stroke-linejoin="round" stroke-linecap="round" /><path d="M203,278.5 L503,578.5" fill="none" stroke="#fff" stroke-width="1.2" stroke-linejoin="round" stroke-linecap="round" /><path d="M203,592.0 L503,292.0" fill="none" stroke="#fff" stroke-width="1.2" stroke-linejoin="round" stroke-linecap="round" /><path d="M203,292.0 L503,592.0" fill="none" stroke="#fff" stroke-width="1.2" stroke-linejoin="round" stroke-linecap="round" /><path d="M203,605.5 L503,305.5" fill="none" stroke="#fff" stroke-width="1.2" stroke-linejoin="round" stroke-linecap="round" /><path d="M203,305.5 L503,605.5" fill="none" stroke="#fff" stroke-width="1.2" stroke-linejoin="round" stroke-linecap="round" /><path d="M203,619.0 L503,319.0" fill="none" stroke="#fff" stroke-width="1.2" stroke-linejoin="round" stroke-linecap="round" /><path d="M203,319.0 L503,619.0" fill="none" stroke="#fff" stroke-width="1.2" stroke-linejoin="round" stroke-linecap="round" /><path d="M203,632.5 L503,332.5" fill="none" stroke="#fff" stroke-width="1.2" stroke-linejoin="round" stroke-linecap="round" /><path d="M203,332.5 L503,632.5" fill="none" stroke="#fff" stroke-width="1.2" stroke-linejoin="round" stroke-linecap="round" /><path d="M203,646.0 L503,346.0" fill="none" stroke="#fff" stroke-width="1.2" stroke-linejoin="round" stroke-linecap="round" /><path d="M203,346.0 L503,646.0" fill="none" stroke="#fff" stroke-width="1.2" stroke-linejoin="round" stroke-linecap="round" /><path d="M203,659.5 L503,359.5" fill="none" stroke="#fff" stroke-width="1.2" stroke-linejoin="round" stroke-linecap="round" /><path d="M203,359.5 L503,659.5" fill="none" stroke="#fff" stroke-width="1.2" stroke-linejoin="round" stroke-linecap="round" /></g><path d="M325,135 L332,128 L336,135 L330,140Z" fill="#f5ebd5"/><path d="M258,185 L268,178 L272,188 L262,195Z" fill="#f5ebd5"/><path d="M432.8,14.6 L402.2,61.2 L367.3,100 L318.3,148 L245.5,199" fill="none" stroke="#fff" stroke-width="3" stroke-linejoin="round" stroke-linecap="round" /><path d="M0,121.8 L20.4,132.8 L154.4,175.7 L171.8,183 L180,196 L182,199" fill="none" stroke="#f2d07a" stroke-width="5.7" stroke-linejoin="round" stroke-linecap="round" /><path d="M0,121.8 L20.4,132.8 L154.4,175.7 L171.8,183 L180,196 L182,199" fill="none" stroke="#fde396" stroke-width="4.5" stroke-linejoin="round" stroke-linecap="round" /><path d="M426.3,0 L432,11.6 L462,39.3 L485.2,74.3 L496.9,100 L499.8,117.5 L500.5,161.2 L505.6,164 L540,166.3 L708,183" fill="none" stroke="#f2d07a" stroke-width="5.7" stroke-linejoin="round" stroke-linecap="round" /><path d="M426.3,0 L432,11.6 L462,39.3 L485.2,74.3 L496.9,100 L499.8,117.5 L500.5,161.2 L505.6,164 L540,166.3 L708,183" fill="none" stroke="#fde396" stroke-width="4.5" stroke-linejoin="round" stroke-linecap="round" /><path d="M609.5,0 L580.4,50.2 L546.9,100 L520.2,146.6 L504.2,168.4 L491.1,186 L470.7,199" fill="none" stroke="#f2d07a" stroke-width="5.8" stroke-linejoin="round" stroke-linecap="round" /><path d="M609.5,0 L580.4,50.2 L546.9,100 L520.2,146.6 L504.2,168.4 L491.1,186 L470.7,199" fill="none" stroke="#fde396" stroke-width="4.6" stroke-linejoin="round" stroke-linecap="round" /><path d="M500.5,161.2 L497,176 L480,199" fill="none" stroke="#f2d07a" stroke-width="5.7" stroke-linejoin="round" stroke-linecap="round" /><path d="M500.5,161.2 L497,176 L480,199" fill="none" stroke="#fde396" stroke-width="4.5" stroke-linejoin="round" stroke-linecap="round" /><path d="M154.5,173.4 Q156.0,170.9 158.0,172.4 L168.0,172.4 Q170.0,170.9 171.5,173.4 L173.0,177.9 Q173.0,185.9 163,187.9 Q153.0,185.9 153.0,177.9Z" fill="#fff" stroke="#555" stroke-width="1"/><text x="163" y="182.9" font-size="9.5" text-anchor="middle" fill="#333">280</text><path d="M608.0,167.0 Q609.5,164.5 611.5,166.0 L621.5,166.0 Q623.5,164.5 625.0,167.0 L626.5,171.5 Q626.5,179.5 616.5,181.5 Q606.5,179.5 606.5,171.5Z" fill="#fff" stroke="#555" stroke-width="1"/><text x="616.5" y="176.5" font-size="9.5" text-anchor="middle" fill="#333">280</text><path d="M478.5,75.0 Q480.0,72.5 482.0,74.0 L492.0,74.0 Q494.0,72.5 495.5,75.0 L497.0,79.5 Q497.0,87.5 487,89.5 Q477.0,87.5 477.0,79.5Z" fill="#fff" stroke="#555" stroke-width="1"/><text x="487" y="84.5" font-size="9.5" text-anchor="middle" fill="#333">431</text><path d="M-13.5,110.7 Q-12.0,108.2 -10.0,109.7 L0.0,109.7 Q2.0,108.2 3.5,110.7 L5.0,115.2 Q5.0,123.2 -5,125.2 Q-15.0,123.2 -15.0,115.2Z" fill="#fff" stroke="#555" stroke-width="1"/><text x="-5" y="120.2" font-size="9.5" text-anchor="middle" fill="#333">280</text><circle cx="469.5" cy="164" r="8" fill="#fff" stroke="#444" stroke-width="1"/><text x="469.5" y="167.5" font-size="9.5" text-anchor="middle" fill="#333">38</text><circle cx="460.5" cy="3.6" r="8" fill="#fff" stroke="#444" stroke-width="1"/><text x="460.5" y="7.1" font-size="9.5" text-anchor="middle" fill="#333">15</text><rect x="558.6" y="-4" width="21.100000000000023" height="14.2" fill="#fff" stroke="#444" stroke-width="1"/><text x="569.1500000000001" y="8.2" font-size="9" text-anchor="middle" fill="#333">390</text><rect x="686.7" y="3.6" width="20.299999999999955" height="11.0" fill="#fff" stroke="#444" stroke-width="1"/><text x="696.85" y="12.6" font-size="9" text-anchor="middle" fill="#333">161</text><path d="M553,76 L569,76 L569,84 Q569,92 561,95 Q553,92 553,84Z" fill="#3d6fc6" stroke="#fff" stroke-width="0.8"/><path d="M553,73.5 Q557,75 561,73.5 Q565,75 569,73.5 L569,77.5 L553,77.5Z" fill="#d34b3d"/><text x="561" y="88" font-size="8.5" font-weight="bold" text-anchor="middle" fill="#fff">85</text><text x="320.4" y="14.4" font-size="13.2" fill="#3d9a46" stroke="#fff" stroke-width="2.5" paint-order="stroke" stroke-linejoin="round">Municipal</text><text x="335" y="26.6" font-size="13.2" fill="#3d9a46" stroke="#fff" stroke-width="2.5" paint-order="stroke" stroke-linejoin="round">Park</text><text x="335.5" y="111.7" font-size="12.9" fill="#d07a4c" text-anchor="end" stroke="#fff" stroke-width="2.5" paint-order="stroke" stroke-linejoin="round">CyberZone</text><text x="335.5" y="124.8" font-size="12.9" fill="#d07a4c" text-anchor="end" stroke="#fff" stroke-width="2.5" paint-order="stroke" stroke-linejoin="round">Entertainment Center</text><text x="343" y="155.7" font-size="13" fill="#4a4a4a" stroke="#fff" stroke-width="2.5" paint-order="stroke" stroke-linejoin="round">Opelika</text><text transform="translate(255,24) rotate(70.5)" font-size="8.5" fill="#555" stroke="#fff" stroke-width="2.5" paint-order="stroke" stroke-linejoin="round">Oak Bowery Rd</text><text transform="translate(293,172) rotate(-42)" font-size="8.5" fill="#555" stroke="#fff" stroke-width="2.5" paint-order="stroke" stroke-linejoin="round">2nd Ave</text><text transform="translate(404,64) rotate(-54)" font-size="8.5" fill="#555" stroke="#fff" stroke-width="2.5" paint-order="stroke" stroke-linejoin="round">Samford Ave</text><path d="M348.5,55 Q341,46 341,41 A7.5,7.5 0 1 1 356,41 Q356,46 348.5,55Z" fill="#34a44a" stroke="#fff" stroke-width="1"/><path d="M348.5,35 L345,42 L347,42 L344.5,46 L352.5,46 L350,42 L352,42Z" fill="#fff"/><circle cx="347.3" cy="109" r="7.3" fill="#f28b48" stroke="#fff" stroke-width="1"/><path d="M344.5,105 L344.5,113 M350,105 L350,113" stroke="#fff" stroke-width="1.2"/><circle cx="353" cy="118" r="7.6" fill="#1b72e8" stroke="#fff" stroke-width="1.5"/><text x="6.5" y="192.3" font-size="19" letter-spacing="0.3" fill="#fff" stroke="#fff" stroke-width="2.4" stroke-linejoin="round" opacity="0.85">Google</text><text x="6.5" y="192.3" font-size="19" letter-spacing="0.3"><tspan fill="#4285f4">G</tspan><tspan fill="#ea4335">o</tspan><tspan fill="#fbbc05">o</tspan><tspan fill="#4285f4">g</tspan><tspan fill="#34a853">l</tspan><tspan fill="#ea4335">e</tspan></text><rect x="422.6" y="186" width="286" height="14" fill="#f4f4f4" fill-opacity="0.75"/><text x="427.7" y="195.8" font-size="9.8" fill="#444">Map data ©2018 Google</text><text x="548" y="195.8" font-size="9.8" fill="#444">Terms of Use</text><text x="619" y="195.8" font-size="9.8" fill="#444">Report a map error</text><rect x="542" y="186" width="1" height="13" fill="#ddd"/><rect x="613" y="186" width="1" height="13" fill="#ddd"/><rect x="10" y="10" width="40" height="81" rx="2" fill="#fff" filter="url(#sh)"/><rect x="21" y="26.2" width="18" height="3.7" fill="#666"/><rect x="28.1" y="19" width="3.7" height="18" fill="#666"/><rect x="15" y="50" width="30" height="1" fill="#e6e6e6"/><rect x="21" y="71" width="18" height="3.7" fill="#666"/><rect x="529" y="10" width="169" height="40" rx="2" fill="#fff" filter="url(#sh)"/><rect x="598.3" y="10" width="1" height="40" fill="#ebebeb"/><text x="547" y="35.7" font-size="18" fill="#000" stroke="#000" stroke-width="0.7">Map</text><text x="617" y="35.7" font-size="18" fill="#565656">Satellite</text><rect x="658" y="70" width="40" height="40" rx="2" fill="#fff" filter="url(#sh)"/><path d="M670,86.5 L670,81 L675.5,81 M680.5,81 L686,81 L686,86.5 M686,93.5 L686,99 L680.5,99 M675.5,99 L670,99 L670,93.5" fill="none" stroke="#666" stroke-width="2.4"/></g></svg>
<div class="t" style="left:457.8px;top:633.5px;font-size:15px;color:#2a7ad3;">Add Job Description</div>
<div class="t" style="left:292.0px;top:691.3px;font-size:15px;color:#252a30;-webkit-text-stroke:0.48px #252a30;">Items</div>
<div class="r" style="left:1067.2px;top:683px;width:110.7px;height:60px;background:#fcefdf"></div>
<div class="r" style="left:444.5px;top:683px;width:733.5px;height:60px;border:1px solid #e8e8e8"></div>
<div class="r" style="left:444.5px;top:729px;width:733.5px;height:1px;background:#e8e8e8"></div>
<div class="r" style="left:637.4px;top:683.5px;width:1px;height:60px;background:#e8e8e8"></div>
<div class="r" style="left:733.5px;top:683.5px;width:1px;height:60px;background:#e8e8e8"></div>
<div class="r" style="left:863.3px;top:683.5px;width:1px;height:60px;background:#e8e8e8"></div>
<div class="r" style="left:972.5px;top:683.5px;width:1px;height:60px;background:#e8e8e8"></div>
<div class="r" style="left:1067.2px;top:683.5px;width:1px;height:60px;background:#e8e8e8"></div>
<div class="t" style="left:457.8px;top:698.6px;font-size:15px;color:#252a30;-webkit-text-stroke:0.48px #252a30;">Product / Service</div>
<div class="t" style="left:650.4px;top:698.6px;font-size:15px;color:#252a30;-webkit-text-stroke:0.48px #252a30;">Quantity</div>
<div class="t" style="left:746.5px;top:698.6px;font-size:15px;color:#252a30;-webkit-text-stroke:0.48px #252a30;">Price</div>
<div class="t" style="left:876.4px;top:698.6px;font-size:15px;color:#252a30;-webkit-text-stroke:0.48px #252a30;">Subtotal</div>
<div class="t" style="left:985.6px;top:698.6px;font-size:15px;color:#252a30;-webkit-text-stroke:0.48px #252a30;">Tax</div>
<div class="t" style="left:1080.6px;top:698.6px;font-size:15px;color:#252a30;-webkit-text-stroke:0.48px #252a30;">Total</div>
<div class="r" style="left:988px;top:118.5px;width:211.5px;height:281.5px;background:#fff;border:1px solid #d4d4d4;border-radius:4px;box-shadow:0 2px 6px rgba(0,0,0,0.08)"></div>
<div class="r" style="left:989px;top:168px;width:209.5px;height:1px;background:#e8e8e8"></div>
<div class="r" style="left:989px;top:350.5px;width:209.5px;height:1px;background:#e8e8e8"></div>
<div class="t" style="left:1008.0px;top:135.1px;font-size:15px;color:#555b63;">Download Scope Of Work</div>
<div class="t" style="left:1008.0px;top:185.3px;font-size:15px;color:#555b63;">Send Quote Via Email</div>
<div class="t" style="left:1008.0px;top:218.1px;font-size:15px;color:#555b63;">Send Quote Via Text</div>
<div class="t" style="left:1008.0px;top:251.3px;font-size:15px;color:#555b63;">Download Quote PDF</div>
<div class="t" style="left:1008.0px;top:284.1px;font-size:15px;color:#555b63;">Directions To Job</div>
<div class="t" style="left:1008.0px;top:317.3px;font-size:15px;color:#555b63;">Edit Details</div>
<div class="t" style="left:1008.0px;top:367.5px;font-size:15px;color:#555b63;">Cancel Quote #10270</div>
</body></html>
